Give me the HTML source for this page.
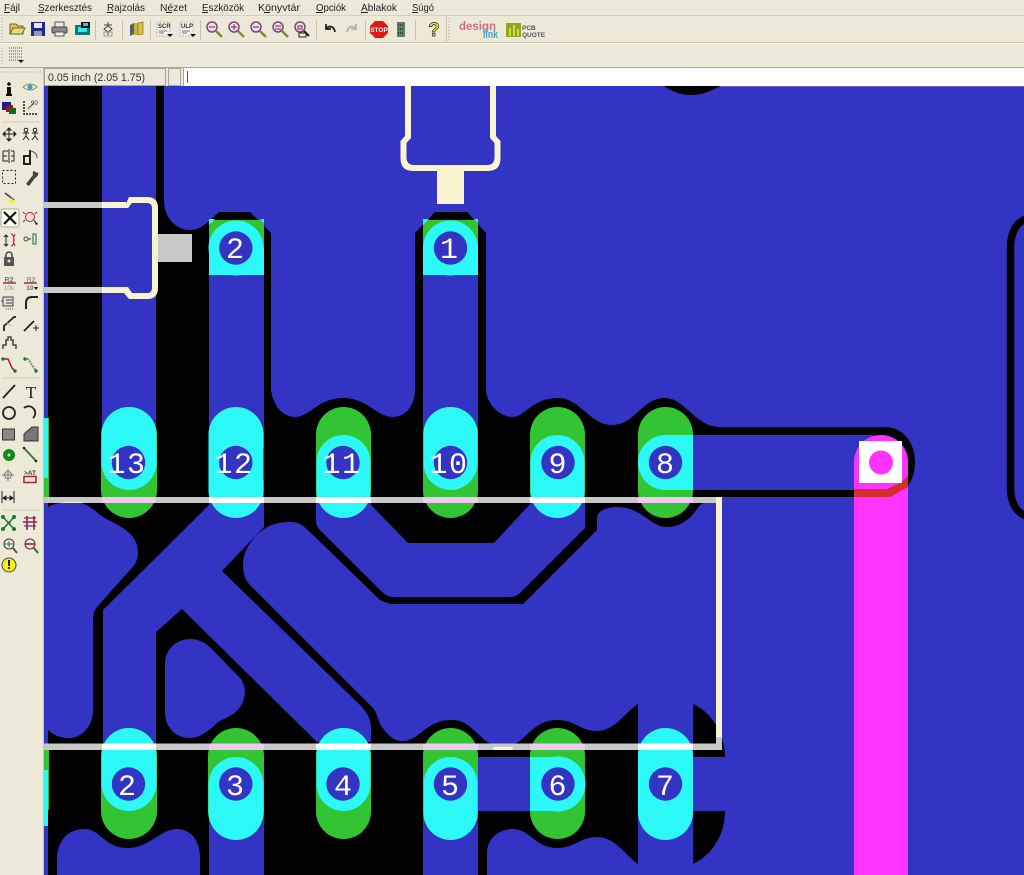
<!DOCTYPE html>
<html><head><meta charset="utf-8"><style>
html,body{margin:0;padding:0;background:#ece9d8;width:1024px;height:875px;overflow:hidden}
svg{position:absolute;left:0;top:0;display:block;filter:blur(.35px)}
text{font-family:"Liberation Sans",sans-serif}
.n{font-family:"Liberation Mono","DejaVu Sans Mono",monospace;font-size:30px;fill:#fff;text-anchor:middle}
.m{font-size:10.500px;fill:#222}
</style></head><body>
<svg width="1024" height="875" viewBox="0 0 1024 875" xmlns="http://www.w3.org/2000/svg">
<rect width="1024" height="875" fill="#ece9d8"/>
<defs><clipPath id="c"><rect x="44" y="86" width="980" height="789"/></clipPath></defs>

<!-- menu -->
<g>
<text class="m" x="4" y="11" textLength="16" lengthAdjust="spacingAndGlyphs">Fájl</text><rect x="4" y="12" width="6" height="1" fill="#222"/>
<text class="m" x="38" y="11" textLength="54" lengthAdjust="spacingAndGlyphs">Szerkesztés</text><rect x="38" y="12" width="6" height="1" fill="#222"/>
<text class="m" x="107" y="11" textLength="38" lengthAdjust="spacingAndGlyphs">Rajzolás</text><rect x="107" y="12" width="6" height="1" fill="#222"/>
<text class="m" x="160" y="11" textLength="27" lengthAdjust="spacingAndGlyphs">Nézet</text><rect x="166" y="12" width="6" height="1" fill="#222"/>
<text class="m" x="202" y="11" textLength="42" lengthAdjust="spacingAndGlyphs">Eszközök</text><rect x="202" y="12" width="6" height="1" fill="#222"/>
<text class="m" x="258" y="11" textLength="42" lengthAdjust="spacingAndGlyphs">Könyvtár</text><rect x="264" y="12" width="6" height="1" fill="#222"/>
<text class="m" x="316" y="11" textLength="30" lengthAdjust="spacingAndGlyphs">Opciók</text><rect x="316" y="12" width="7" height="1" fill="#222"/>
<text class="m" x="361" y="11" textLength="36" lengthAdjust="spacingAndGlyphs">Ablakok</text><rect x="361" y="12" width="7" height="1" fill="#222"/>
<text class="m" x="412" y="11" textLength="22" lengthAdjust="spacingAndGlyphs">Súgó</text><rect x="412" y="12" width="6" height="1" fill="#222"/>
</g>
<rect x="0" y="15" width="1024" height="1" fill="#d4d0bc"/>
<rect x="0" y="42" width="1024" height="1" fill="#c4c0ac"/>
<rect x="0" y="43" width="1024" height="1" fill="#fbfaf4"/>
<rect x="0" y="67" width="1024" height="1" fill="#a8a8a0"/>

<!-- toolbar grips / separators -->
<path d="M2 18v22M2 48v16M449 18v22" stroke="#a8a490" stroke-width="1" stroke-dasharray="1 2"/>
<path d="M95.500 20v20M122.500 20v20M150.500 20v20M200.500 20v20M316.500 20v20M365.500 20v20M415.500 20v20M446.500 16v26" stroke="#c6c2ae" stroke-width="1"/>

<!-- folder -->
<path d="M10 24h6l2 2h5v8H10z" fill="#d8c860" stroke="#6a6420"/><path d="M10 34l3-6h12l-3 6z" fill="#e8dc80" stroke="#6a6420"/>
<!-- save -->
<rect x="31" y="22" width="14" height="14" fill="#1f2c8c"/><rect x="34" y="23" width="8" height="5" fill="#e8e8f0"/><rect x="34" y="31" width="8" height="5" fill="#9a9ab8"/>
<!-- printer -->
<rect x="55" y="22" width="9" height="5" fill="#e8e8e8" stroke="#555"/><rect x="52" y="27" width="15" height="6" rx="1" fill="#8a8a8a" stroke="#444"/><rect x="55" y="32" width="9" height="4" fill="#eee" stroke="#555"/>
<!-- film -->
<rect x="75" y="25" width="15" height="10" fill="#0c7a80"/><rect x="78" y="27" width="9" height="5" fill="#38e6e0"/><rect x="81" y="22" width="9" height="6" fill="#111"/><rect x="83" y="23" width="5" height="3" fill="#4be"/>
<!-- chip -->
<path d="M104 25h8M108 22v3M104 29l4-3 4 3-4 3zM108 32v3" stroke="#444" fill="none"/><rect x="104" y="32" width="8" height="4" fill="none" stroke="#9a9a8a"/>
<!-- books -->
<path d="M130 25l4-2v11l-4 2z" fill="#55606a"/><path d="M134 23h4v12h-4z" fill="#c8b040"/><path d="M138 23l5-1v12l-5 1z" fill="#d8c03a" stroke="#6c6420" stroke-width=".6"/>
<!-- SCR ULP -->
<rect x="157" y="22" width="13" height="14" fill="#f4f2e8" stroke="#bbb" stroke-dasharray="2 1"/><text x="158" y="28" font-size="6" font-weight="bold" fill="#333">SCR</text><path d="M159 31h8M159 33h5" stroke="#777"/><path d="M167 34h6l-3 3z" fill="#111"/>
<rect x="180" y="22" width="13" height="14" fill="#f4f2e8" stroke="#bbb" stroke-dasharray="2 1"/><text x="181" y="28" font-size="6" font-weight="bold" fill="#333">ULP</text><path d="M182 31h8M182 33h5" stroke="#777"/><path d="M190 34h6l-3 3z" fill="#111"/>
<!-- zooms -->
<g fill="#e8dcea" stroke="#7c4a70" stroke-width="1.500">
<circle cx="212" cy="27" r="5"/><circle cx="234" cy="27" r="5"/><circle cx="256" cy="27" r="5"/><circle cx="278" cy="27" r="5"/><circle cx="300" cy="27" r="5"/>
</g>
<path d="M216 31l6 6M238 31l6 6M260 31l6 6M282 31l6 6" stroke="#7f8a40" stroke-width="2.500"/>
<path d="M304 31l5 5" stroke="#222" stroke-width="2"/>
<path d="M209 27h6M231 27h6M234 24v6M253 27h6M275 26h6M275 29h6M298 26h4v3h-4z" stroke="#8c2050" fill="none"/>
<rect x="299" y="33" width="7" height="4" fill="none" stroke="#222"/>
<!-- undo/redo -->
<path d="M326 24v5h5M326 29c3-4 8-3 9 3" fill="none" stroke="#222" stroke-width="1.800"/>
<path d="M356 24v5h-5M356 29c-3-4-8-3-9 3" fill="none" stroke="#b4b4a8" stroke-width="1.800"/>
<!-- stop -->
<path d="M375 21h8l5 5v7l-5 5h-8l-5-5v-7z" fill="#e01818"/><text x="379" y="32" font-size="6.500" font-weight="bold" fill="#fff" text-anchor="middle">STOP</text>
<!-- hatch -->
<rect x="397" y="22" width="8" height="15" fill="#6a7a66"/><path d="M398 25h6M398 29h6M398 33h6" stroke="#2c4c30" stroke-dasharray="1 1" stroke-width="2"/>
<!-- help -->
<text x="434" y="36" font-size="19" font-weight="bold" fill="#f6ee20" stroke="#222" stroke-width=".7" text-anchor="middle">?</text>
<!-- design link -->
<text x="459" y="30" font-size="12" font-weight="bold" fill="#d46a82" textLength="37" lengthAdjust="spacingAndGlyphs">design</text>
<text x="483" y="38" font-size="11" font-weight="bold" fill="#4aa0c0" textLength="15" lengthAdjust="spacingAndGlyphs">link</text>
<!-- pcb quote -->
<rect x="506" y="23" width="15" height="14" fill="#8aa81a"/><path d="M510 36v-8M514 36v-11M518 36v-7" stroke="#e4e850" stroke-width="1.500"/>
<text x="522" y="30" font-size="6.500" font-weight="bold" fill="#555">PCB</text><text x="522" y="37" font-size="6.500" font-weight="bold" fill="#555">QUOTE</text>
<!-- row 2 icon -->
<path d="M9 48h14M9 51h14M9 54h14M9 57h14M9 60h14" stroke="#555" stroke-dasharray="1 1"/><path d="M18 60h6l-3 3z" fill="#111"/>

<!-- status -->
<path d="M1 72h40" stroke="#a8a490" stroke-dasharray="1 2"/>
<rect x="44.500" y="68.500" width="121" height="17" fill="#ece9d8" stroke="#a8a698"/>
<text x="48" y="81" font-size="11" fill="#333" textLength="97" lengthAdjust="spacingAndGlyphs">0.05 inch (2.05 1.75)</text>
<rect x="168.500" y="68.500" width="12" height="17" fill="#ece9d8" stroke="#a8a698"/>
<rect x="183" y="68" width="841" height="18" fill="#fff"/>
<rect x="183" y="68" width="1" height="18" fill="#a8a8a0"/>
<rect x="187" y="71" width="1" height="12" fill="#555"/>

<!-- left tools -->
<g>
<circle cx="9" cy="84" r="1.800" fill="#111"/><rect x="7" y="87" width="4" height="8" fill="#111"/><rect x="6" y="94" width="6" height="2" fill="#111"/>
<path d="M23 87q7-6 14 0q-7 6-14 0z" fill="#e6efe0" stroke="#7b9a50"/><circle cx="30" cy="87" r="2.500" fill="#3a9ab8"/>
<rect x="2" y="102" width="9" height="8" fill="#1b1b9a"/><rect x="6" y="105" width="7" height="7" fill="#a01414"/><rect x="9" y="108" width="7" height="6" fill="#106a20"/>
<path d="M24 101v13h14" fill="none" stroke="#222" stroke-dasharray="2 1" stroke-width="1.500"/><path d="M28 109l5-5" stroke="#555"/><text x="31" y="105" font-size="6" fill="#222">90</text>
<path d="M2 122h38" stroke="#d0ccb8"/>
<path d="M3 134h13M9 128v13M3 134l2-2v4zM16 134l-2-2v4zM9 128l-2 2h4zM9 141l-2-2h4z" stroke="#222" fill="#222"/>
<g fill="none" stroke="#222"><circle cx="26" cy="130" r="1.800"/><path d="M26 132v4M23 133h6M26 136l-3 4M26 136l3 4"/><circle cx="35" cy="130" r="1.800"/><path d="M35 132v4M32 133h6M35 136l-3 4M35 136l3 4"/></g>
<path d="M3 151h5M3 151v10h5M3 156h4M14 151h-3M14 151v10h-3M14 156h-3M9 149v14" fill="none" stroke="#222"/>
<path d="M24 156h6v8h-6zM30 150v14" fill="none" stroke="#222" stroke-width="2"/><path d="M30 151q7 1 7 7" fill="none" stroke="#555"/>
<rect x="2.500" y="170.500" width="13" height="13" fill="none" stroke="#222" stroke-dasharray="2 2"/>
<path d="M26 184l7-9q-1-3 1-4l3 2 1-1q1 4-3 6l-6 8z" fill="#444"/>
<path d="M5 193l9 7" stroke="#444" stroke-width="1.500"/><path d="M6 203l6-5 3 5z" fill="#f2f040"/>
<rect x="1" y="209" width="18" height="18" rx="2" fill="#fbfaf4" stroke="#aaa890"/>
<path d="M4 212l12 12M16 212l-12 12" stroke="#111" stroke-width="2.200"/>
<circle cx="30" cy="217" r="4.500" fill="#eedcdc" stroke="#9a2c2c"/><path d="M33 219l5 5-2 1z" fill="#222"/><path d="M25 214l-2-2M25 220l-2 2M35 214l2-2" stroke="#9a2c2c"/>
<path d="M6 235v11M4 237l2-2 2 2M4 244l2 2 2-2" fill="none" stroke="#222"/><path d="M11 234c4 0 4 12 0 12M15 234c-2 4-2 8 0 12" fill="none" stroke="#a03030"/>
<circle cx="26" cy="239" r="2" fill="none" stroke="#1a6a2a"/><path d="M28 239h3" stroke="#222"/><rect x="33" y="234" width="3" height="10" fill="none" stroke="#1a6a2a"/>
<path d="M6 257v-2a3 3 0 0 1 6 0v2" fill="none" stroke="#444" stroke-width="1.500"/><rect x="4" y="257" width="10" height="9" fill="#555"/><circle cx="9" cy="261" r="1.500" fill="#ddd"/>
<text x="9" y="282" font-size="7" font-weight="bold" fill="#777" text-anchor="middle">R2</text><path d="M3 283h13" stroke="#a03030" stroke-width="1.500"/><text x="9" y="290" font-size="6.500" fill="#999" text-anchor="middle">10k</text>
<text x="31" y="282" font-size="7" font-weight="bold" fill="#999" text-anchor="middle">R2</text><path d="M24 283h13" stroke="#a03030" stroke-width="1.500"/><text x="30" y="290" font-size="6.500" font-weight="bold" fill="#666" text-anchor="middle">10</text><path d="M34 287h4l-2 3z" fill="#111"/>
<rect x="3" y="297" width="10" height="9" fill="#ddd" stroke="#444"/><path d="M6 300h6M6 303h6M3 301h-2" stroke="#444"/><path d="M6 309h8" stroke="#444" stroke-dasharray="1 1"/>
<path d="M26 309v-6q0-6 6-6h6" fill="none" stroke="#222" stroke-width="2"/>
<path d="M4 331v-5l10-9h2" fill="none" stroke="#222" stroke-width="1.800"/><path d="M6 322l5 4" stroke="#bbb"/>
<path d="M24 331l10-10" stroke="#222" stroke-width="1.800"/><path d="M33 328h6M36 325v6" stroke="#222"/>
<path d="M3 349v-4h3v-5h2v-3h3v3h2v5h3v4" fill="none" stroke="#444" stroke-width="1.500"/>
<path d="M3 359h5l4 9 3 3" fill="none" stroke="#b01818" stroke-width="1.500"/><circle cx="3" cy="359" r="1.700" fill="#1a7a2a"/><circle cx="15" cy="371" r="1.700" fill="#1a7a2a"/>
<path d="M24 359h4l8 12" fill="none" stroke="#888" stroke-width="2" stroke-dasharray="2 1"/><circle cx="25" cy="359" r="1.700" fill="#1a7a2a"/><circle cx="36" cy="371" r="1.700" fill="#1a7a2a"/>
<path d="M2 378h38" stroke="#d0ccb8"/>
<path d="M3 398l12-13" stroke="#222" stroke-width="1.800"/>
<text x="31" y="398" style="font-family:'Liberation Serif',serif" font-size="17" fill="#222" text-anchor="middle">T</text>
<circle cx="9" cy="413" r="6" fill="none" stroke="#222" stroke-width="1.800"/>
<path d="M24 408a6.500 6.500 0 0 1 9 10" fill="none" stroke="#222" stroke-width="1.800"/>
<rect x="2.500" y="429" width="12" height="11" fill="#888" stroke="#333"/>
<path d="M24 441v-7l8-7h6v14z" fill="#777" stroke="#333"/>
<circle cx="9" cy="455" r="6" fill="#118a18"/><circle cx="9" cy="455" r="1.500" fill="#bfe8bf"/>
<path d="M24 448l12 13" stroke="#3a7a28" stroke-width="2"/><circle cx="24" cy="448" r="1.300" fill="#222"/><circle cx="36" cy="461" r="1.300" fill="#222"/>
<circle cx="8" cy="475" r="3.500" fill="#eee" stroke="#777"/><path d="M2 475h12M8 469v12" stroke="#777"/>
<text x="30" y="475" font-size="6.500" font-weight="bold" fill="#444" text-anchor="middle">&gt;AT</text><rect x="24" y="476.500" width="12" height="6" fill="none" stroke="#a02828" stroke-width="1.500"/>
<path d="M2 491v12M14 491v12M3 498h10M3 498l3-2v4zM13 498l-3-2v4z" stroke="#222" fill="#222"/>
<path d="M2 510h38" stroke="#d0ccb8"/>
<path d="M3 517l11 12M14 517l-11 12" stroke="#1a7a2a" stroke-width="1.500"/><g fill="#1a7a2a"><circle cx="3" cy="517" r="2"/><circle cx="14" cy="517" r="2"/><circle cx="3" cy="529" r="2"/><circle cx="14" cy="529" r="2"/><circle cx="9" cy="523" r="1.500"/></g>
<path d="M24 518h12M24 526h12" stroke="#1818a8"/><path d="M27 516v14M34 516v14" stroke="#a01818" stroke-width="1.500"/><path d="M23 522h14" stroke="#a01860" stroke-width="1.500"/>
<circle cx="9" cy="544" r="5" fill="#eee8ea" stroke="#5a2a2a"/><path d="M13 548l4 5" stroke="#555" stroke-width="2"/><path d="M4 544h10M9 541v6" stroke="#1a7a2a"/>
<circle cx="30" cy="544" r="5" fill="#eee8ea" stroke="#5a2a2a"/><path d="M34 548l4 5" stroke="#555" stroke-width="2"/><path d="M25 544h10" stroke="#a01818" stroke-width="1.500"/>
<circle cx="9" cy="565" r="7" fill="#f6ee20" stroke="#444"/><rect x="8" y="560" width="2" height="6" fill="#222"/><circle cx="9" cy="568" r="1.100" fill="#222"/>
</g>

<!-- CANVAS -->
<g clip-path="url(#c)">
<rect x="44" y="86" width="980" height="789" fill="#3333c4"/>
<path fill="#000" d="M48 86H164V200C164 218 176 230 190 230C198 230 203 226 209 221L219 212H250L271 233V390C273 405 282 417 295 417C310 417 318 398 343 398C368 398 376 417 393 417C406 417 415 405 415 390V233L435 212H467L486 233V390C487 405 500 417 513 417C525 417 532 398 558 398C580 398 590 425 612 425C635 425 642 398 665 398C685 398 695 427 720 427H885C905 427 915 445 915 462C915 480 905 497 885 497H716L700 505C690 520 680 527 667 527C650 527 642 507 617 507C607 507 599 510 597 517V530L523 604H390L380 600L310 532C300 522 295 522 288 522C262 522 243 545 243 565C243 575 246 581 250 585L373 708C378 714 378 722 382 727C390 738 395 741 403 741C420 741 425 720 452 720C475 720 480 747 503 747C525 747 530 720 557 720C575 720 580 731 597 731C615 731 625 712 638 704V864C625 855 615 837 597 837C580 837 575 848 557 848C535 848 530 829 513 829C497 829 487 840 487 853V875H200V857C200 840 190 829 177 829C160 829 150 848 127 848C105 848 100 829 85 829C68 829 57 840 57 860V875H48Z"/>
<path fill="#000" d="M693 704C712 712 725 735 725 757H693ZM693 811H725C725 835 712 855 693 864Z"/>
<path fill="#000" d="M664 86Q690 104 720 86Z"/>
<path fill="none" stroke="#000" stroke-width="7.500" d="M1026 219C1015 223 1010.500 235 1010.500 247V488C1010.500 500 1015 512 1026 516"/>
<g fill="#3333c4">
<rect x="102" y="86" width="54" height="400"/>
<rect x="209" y="248" width="55" height="200"/>
<rect x="423" y="248" width="55" height="200"/>
<rect x="693" y="435" width="180" height="55"/>
<path d="M209 505L103 610V760H156V632L182 609L317 742H371V728C371 718 366 711 360 705L222 571L264 527V480H209Z"/>
<path d="M316 490V515C316 520 315 525 320 530L380 590C385 595 388 597 395 597H510C516 597 518 595 522 591L585 528V490H531V503L494 543H408L371 505V490Z"/>
<path d="M44 510C50 504 60 502 73 502C85 502 92 508 100 515C115 525 138 530 138 553C138 560 135 565 130 570L97 607C94 611 93 615 93 620V710C93 728 80 738 70 738C58 738 50 734 44 725Z"/>
<path d="M165 663C165 650 176 639 190 639C198 639 204 642 210 647L240 678C248 688 245 700 240 707C235 715 225 718 218 722C210 730 200 738 190 738C176 738 165 728 165 712Z"/>
<rect x="209" y="800" width="55" height="75"/>
<rect x="423" y="800" width="55" height="75"/>
<rect x="478" y="757" width="52" height="54"/>
<rect x="44" y="810" width="4" height="65"/>
</g>

<rect x="44" y="418" width="5" height="79" fill="#33c433"/>
<rect x="44" y="418" width="4" height="60" rx="1" fill="#2df8f8"/>
<rect x="44" y="750" width="5" height="60" fill="#33c433"/>
<rect x="44" y="770" width="4" height="56" fill="#2df8f8"/>

<g fill="#33c433">
<rect x="101" y="407" width="56" height="111" rx="28"/>
<rect x="316" y="407" width="55" height="111" rx="27.500"/>
<rect x="423" y="407" width="55" height="111" rx="27.500"/>
<rect x="530" y="407" width="55" height="111" rx="27.500"/>
<rect x="638" y="407" width="55" height="111" rx="27.500"/>
<rect x="101" y="728" width="56" height="111" rx="28"/>
<rect x="208" y="728" width="56" height="111" rx="28"/>
<rect x="316" y="728" width="55" height="111" rx="27.500"/>
<rect x="423" y="728" width="55" height="111" rx="27.500"/>
<rect x="530" y="728" width="55" height="111" rx="27.500"/>
<rect x="209" y="220" width="55" height="28"/>
<rect x="423" y="220" width="55" height="28"/>
</g>
<g fill="#2df8f8">
<rect x="101.500" y="407" width="55" height="83" rx="27.500"/>
<rect x="208.500" y="407" width="55" height="111" rx="27.500"/>
<rect x="316.500" y="435" width="54" height="83" rx="27"/>
<rect x="423.500" y="407" width="54" height="83" rx="27"/>
<rect x="530.500" y="435" width="54" height="83" rx="27"/>
<circle cx="665.500" cy="462.500" r="27.500"/><rect x="665.500" y="435" width="27.500" height="55"/>
<rect x="101.500" y="728" width="55" height="83" rx="27.500"/>
<rect x="208.500" y="757" width="55" height="83" rx="27.500"/>
<rect x="316.500" y="728" width="54" height="83" rx="27"/>
<rect x="423.500" y="757" width="54" height="83" rx="27"/>
<circle cx="558" cy="784" r="27.500"/><rect x="530" y="757" width="28" height="54"/>
<rect x="638" y="728" width="55" height="112" rx="27.500"/>
<rect x="209" y="248" width="55" height="27"/><circle cx="236" cy="248" r="27.500"/>
<rect x="423" y="248" width="55" height="27"/><circle cx="450.500" cy="248" r="27.500"/>
<path d="M209 219h6l-6 6zM264 219h-4l4 4zM423 219h6l-6 6zM478 219h-4l4 4z"/>
</g>

<g fill="#3333c4">
<circle cx="128.500" cy="462.500" r="16.700"/><circle cx="235.800" cy="462.500" r="16.700"/><circle cx="343" cy="462.500" r="16.700"/><circle cx="450.500" cy="462.500" r="16.700"/><circle cx="558" cy="462.500" r="16.700"/><circle cx="665.500" cy="462.500" r="16.700"/>
<circle cx="128.500" cy="784" r="16.700"/><circle cx="235.800" cy="784" r="16.700"/><circle cx="343" cy="784" r="16.700"/><circle cx="450.500" cy="784" r="16.700"/><circle cx="558" cy="784" r="16.700"/><circle cx="665.500" cy="784" r="16.700"/>
<circle cx="235.800" cy="248" r="16.700"/><circle cx="450.500" cy="248" r="16.700"/>
</g>

<path fill="#ff33ff" d="M854 875V462A27 27 0 0 1 908 462V875Z"/>
<path fill="#d22f30" d="M854 489H887L902 482L908 475V487L890 497H854Z"/>
<rect x="859" y="441" width="43" height="42" fill="#fff"/>
<circle cx="881" cy="462.500" r="12" fill="#ff33ff"/>
<rect x="720" y="85" width="304" height="1.500" fill="#c070e8"/>

<g fill="#f8f4d0">
<rect x="102" y="202" width="24" height="6"/>
<path d="M124 208l5-11h18q11 0 11 11v80q0 11-11 11h-18l-5-6h-22v-6h26l4 6h15q5 0 5-5v-80q0-5-5-5h-15l-4 5z"/>
<path d="M405 86V136L400.500 141V158Q400.500 171 413 171H488Q500.500 171 500.500 158V141L496 136V86H490V138L494.500 143V157Q494.500 165 487 165H414Q406.500 165 406.500 157V143L411 138V86Z"/>
<rect x="437" y="171" width="27" height="33"/>
</g>
<rect x="44" y="202" width="58" height="6" fill="#c8c8c8"/>
<rect x="44" y="287" width="58" height="6" fill="#c8c8c8"/>
<rect x="158" y="234" width="34" height="28" fill="#c8c8c8"/>

<rect x="716" y="497" width="6" height="240" fill="#f8f4d0"/>
<rect x="716" y="737" width="6" height="13" fill="#c8c8c8"/>
<rect x="44" y="497" width="672" height="6" fill="#c8c8c8"/>
<rect x="44" y="743.500" width="678" height="6.500" fill="#c8c8c8"/>
<g fill="#f4c8f4">
<rect x="102" y="497" width="54" height="6"/><rect x="423" y="497" width="55" height="6"/><rect x="638" y="497" width="55" height="6"/>
<rect x="209" y="743.500" width="55" height="6.500"/><rect x="423" y="743.500" width="55" height="6.500"/><rect x="530" y="743.500" width="55" height="6.500"/>
</g>
<g fill="#fff">
<rect x="209" y="497" width="55" height="6"/><rect x="316" y="497" width="55" height="6"/><rect x="530" y="497" width="55" height="6"/>
<rect x="102" y="743.500" width="54" height="6.500"/><rect x="316" y="743.500" width="55" height="6.500"/><rect x="638" y="743.500" width="55" height="6.500"/>
</g>
<rect x="493" y="747" width="20" height="3" rx="1.500" fill="#f8f4d0"/>
<rect x="62" y="502" width="22" height="1" fill="#f8f4d0"/>

<g>
<text class="n" x="127" y="473" style="letter-spacing:1.500px">13</text>
<text class="n" x="234" y="473" style="letter-spacing:1.500px">12</text>
<text class="n" x="342" y="473" style="letter-spacing:1.500px">11</text>
<text class="n" x="449" y="473" style="letter-spacing:1.500px">10</text>
<text class="n" x="557.500" y="473">9</text>
<text class="n" x="665" y="473">8</text>
<text class="n" x="127" y="795">2</text>
<text class="n" x="235" y="795">3</text>
<text class="n" x="343" y="795">4</text>
<text class="n" x="450" y="795">5</text>
<text class="n" x="557.500" y="795">6</text>
<text class="n" x="665" y="795">7</text>
<text class="n" x="235" y="258">2</text>
<text class="n" x="449" y="258">1</text>
</g>
</g>
<rect x="43" y="68" width="1" height="807" fill="#c8c4b0"/>
</svg>
</body></html>
